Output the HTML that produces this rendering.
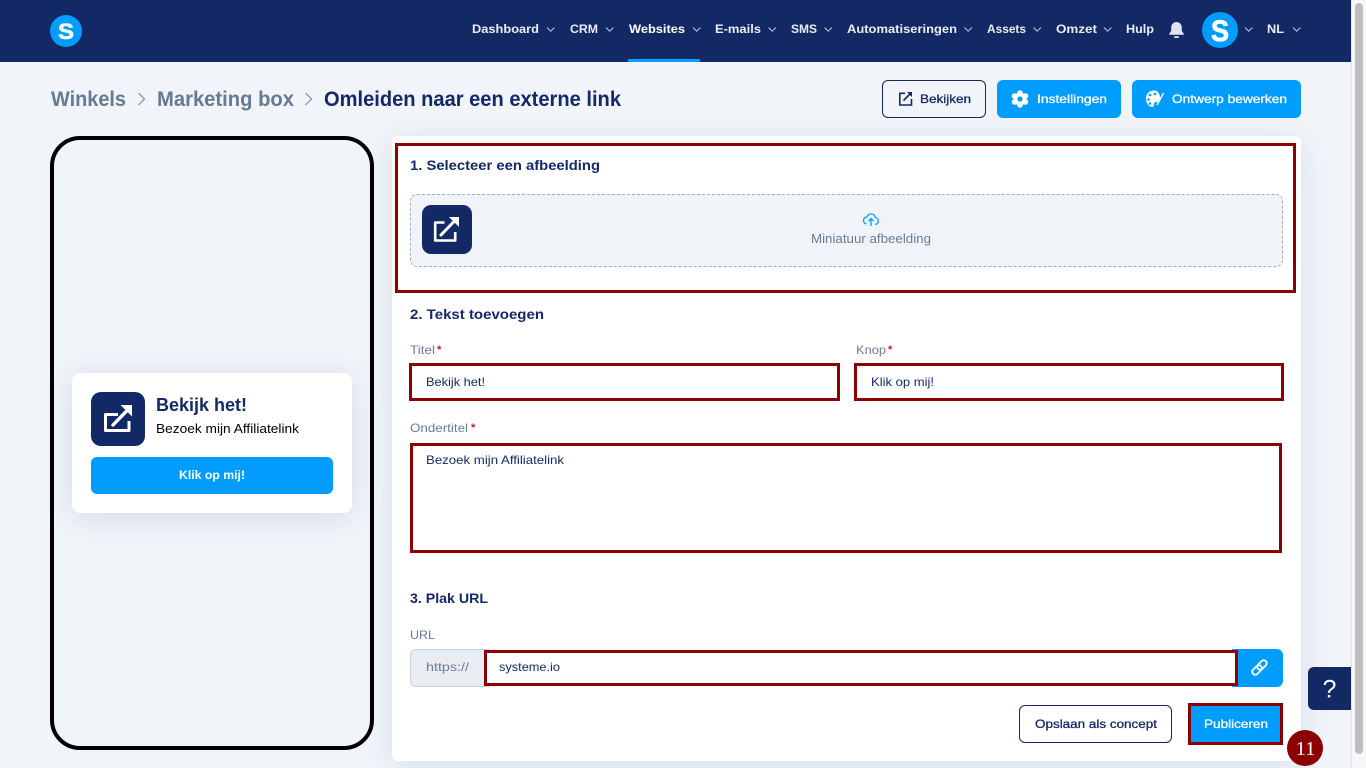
<!DOCTYPE html>
<html lang="nl"><head><meta charset="utf-8"><title>Omleiden naar een externe link</title>
<style>
html,body{margin:0;padding:0;width:1366px;height:768px;overflow:hidden;background:#f1f4f9}
div{position:absolute;box-sizing:border-box}
svg{position:absolute;left:0;top:0}
text{font-family:"Liberation Sans",sans-serif}
.b{font-weight:700}
.m{font-size:12px;stroke-width:.3px}
.mw{fill:#fff;stroke:#fff}
.mn{fill:#14296a;stroke:#14296a}
.w{fill:#fff}
.n{fill:#14296a}
.g{fill:#6a7c96}
.red{border:3px solid #8b0000}
</style></head><body>
<div style="left:0;top:0;width:1351px;height:62px;background:#132966"></div>
<div style="left:628px;top:59px;width:72px;height:3px;background:#009dff"></div>
<div style="left:1351px;top:0;width:15px;height:768px;background:#f7f7f7;border-left:1px solid #e6e6e6"></div>
<div style="left:1355px;top:3px;width:8px;height:751px;background:#bfbfbf;border-radius:4px"></div>

<div style="left:50px;top:136px;width:324px;height:614px;border:4px solid #000;border-radius:30px"></div>
<div style="left:72px;top:373px;width:280px;height:140px;background:#fff;border-radius:8px;box-shadow:0 4px 30px rgba(20,41,102,.12)"></div>
<div style="left:91px;top:392px;width:54px;height:54px;background:#132966;border-radius:10px"></div>
<div style="left:91px;top:457px;width:242px;height:37px;background:#009dff;border-radius:6px"></div>

<div style="left:392px;top:136px;width:909px;height:625px;background:#fff;border-radius:6px;box-shadow:0 5px 30px rgba(20,41,102,.1)"></div>
<div style="left:410px;top:194px;width:873px;height:73px;background:#f0f4f9;border:1px dashed #9db2bd;border-radius:7px"></div>
<div style="left:422px;top:205px;width:50px;height:49px;background:#132966;border-radius:9px"></div>
<div class="red" style="left:395px;top:143px;width:901px;height:150px"></div>
<div class="red" style="left:409px;top:363px;width:431px;height:38px"></div>
<div class="red" style="left:854px;top:363px;width:430px;height:38px"></div>
<div class="red" style="left:410px;top:443px;width:872px;height:110px"></div>
<div style="left:410px;top:649px;width:80px;height:38px;background:#e9edf3;border:1px solid #c9d4de;border-radius:6px 0 0 6px"></div>
<div style="left:1232px;top:649px;width:51px;height:38px;background:#009dff;border-radius:0 6px 6px 0"></div>
<div class="red" style="left:484px;top:650px;width:754px;height:36px;background:#fff"></div>

<div style="left:882px;top:80px;width:104px;height:38px;border:1px solid #132966;border-radius:6px"></div>
<div style="left:997px;top:80px;width:124px;height:38px;background:#009dff;border-radius:6px"></div>
<div style="left:1132px;top:80px;width:169px;height:38px;background:#009dff;border-radius:6px"></div>
<div style="left:1019px;top:705px;width:153px;height:38px;border:1px solid #132966;border-radius:6px;background:#fff"></div>
<div class="red" style="left:1188px;top:703px;width:95px;height:42px;background:#009dff"></div>
<div style="left:1308px;top:667px;width:43px;height:43px;background:#132966;border-radius:6px 0 0 6px"></div>

<svg width="1366" height="768" viewBox="0 0 1366 768" xmlns="http://www.w3.org/2000/svg">
<circle cx="66" cy="31" r="16" fill="#009dff"/>
<text x="58" y="39" textLength="16" lengthAdjust="spacingAndGlyphs" class="b w" font-size="22" stroke="#fff" stroke-width=".6">S</text>
<circle cx="1220" cy="30" r="18" fill="#009dff"/>
<text x="1211" y="41" textLength="18" lengthAdjust="spacingAndGlyphs" class="b w" font-size="30" stroke="#fff" stroke-width=".8">S</text>

<g class="b" font-size="12" fill="#e9edf5">
<text x="472" y="33" textLength="67" lengthAdjust="spacingAndGlyphs">Dashboard</text>
<text x="570" y="33" textLength="28" lengthAdjust="spacingAndGlyphs">CRM</text>
<text x="629" y="33" textLength="56" lengthAdjust="spacingAndGlyphs" fill="#fff">Websites</text>
<text x="715" y="33" textLength="46" lengthAdjust="spacingAndGlyphs">E-mails</text>
<text x="791" y="33" textLength="26" lengthAdjust="spacingAndGlyphs">SMS</text>
<text x="847" y="33" textLength="110" lengthAdjust="spacingAndGlyphs">Automatiseringen</text>
<text x="987" y="33" textLength="39" lengthAdjust="spacingAndGlyphs">Assets</text>
<text x="1056" y="33" textLength="41" lengthAdjust="spacingAndGlyphs">Omzet</text>
<text x="1126" y="33" textLength="28" lengthAdjust="spacingAndGlyphs">Hulp</text>
<text x="1267" y="33" textLength="17" lengthAdjust="spacingAndGlyphs">NL</text>
</g>
<g fill="none" stroke="#c9d1e0" stroke-width=".9">
<path d="M547 27.500l3.700 3.700 3.700-3.700"/>
<path d="M606 27.500l3.700 3.700 3.700-3.700"/>
<path d="M693 27.500l3.700 3.700 3.700-3.700"/>
<path d="M768.500 27.500l3.700 3.700 3.700-3.700"/>
<path d="M824.500 27.500l3.700 3.700 3.700-3.700"/>
<path d="M964.500 27.500l3.700 3.700 3.700-3.700"/>
<path d="M1033.500 27.500l3.700 3.700 3.700-3.700"/>
<path d="M1104 27.500l3.700 3.700 3.700-3.700"/>
<path d="M1245 27.500l3.700 3.700 3.700-3.700"/>
<path d="M1293 27.500l3.700 3.700 3.700-3.700"/>
</g>
<path d="M1176.500 22c-3.200 0-5.300 2.500-5.300 5.500v3.500l-2 2.800v1h14.600v-1l-2-2.800v-3.500c0-3-2.100-5.500-5.300-5.500z" fill="#dfe4ee"/>
<rect x="1174" y="36.300" width="5" height="1.700" rx=".85" fill="#dfe4ee"/>

<g class="b" font-size="21">
<text x="51" y="106" textLength="75" lengthAdjust="spacingAndGlyphs" fill="#667a94">Winkels</text>
<text x="157" y="106" textLength="137" lengthAdjust="spacingAndGlyphs" fill="#667a94">Marketing box</text>
<text x="324" y="106" textLength="297" lengthAdjust="spacingAndGlyphs" fill="#14296a">Omleiden naar een externe link</text>
</g>
<g fill="none" stroke="#7d8ea5" stroke-width="1.200">
<path d="M138.500 93l6 6-6 6"/><path d="M305.500 93l6 6-6 6"/>
</g>

<path d="M905 93.300h-5.200v11.700h11.700v-6" fill="none" stroke="#14296a" stroke-width="1.600"/>
<path d="M903.500 100.500l6.500-6.500" fill="none" stroke="#14296a" stroke-width="1.600"/>
<path d="M907 92h5v5z" fill="#14296a"/>
<text x="920" y="103" textLength="51" lengthAdjust="spacingAndGlyphs" class="m mn">Bekijken</text>
<g transform="translate(1020 99)" fill="#fff">
<circle r="6.500"/><circle cy="-6" r="2.800"/><circle cy="6" r="2.800"/><circle cx="5.500" cy="-3" r="2.800"/><circle cx="-5.500" cy="-3" r="2.800"/><circle cx="5.500" cy="3" r="2.800"/><circle cx="-5.500" cy="3" r="2.800"/>
<circle r="2.600" fill="#009dff"/>
</g>
<text x="1037" y="103" textLength="70" lengthAdjust="spacingAndGlyphs" class="m mw">Instellingen</text>
<path d="M1154 90.500c-5 0-8 3.500-8 8 0 4 2.500 8.500 6 8.500 2 0 2-1.500 2-3s1.500-2 3-2 3-1 3-4c0-4.500-2.500-7.500-6-7.500z" fill="#fff"/>
<g fill="#009dff"><circle cx="1150" cy="95" r="1.300"/><circle cx="1155" cy="94" r="1.300"/><circle cx="1148.500" cy="99.500" r="1.300"/><circle cx="1150" cy="103.500" r="1.300"/></g>
<path d="M1163.500 93l-6.500 12" stroke="#fff" stroke-width="1.400" fill="none"/>
<text x="1172" y="103" textLength="115" lengthAdjust="spacingAndGlyphs" class="m mw">Ontwerp bewerken</text>

<path d="M118 414.500h-12.500v16h23.500v-9.500" fill="none" stroke="#fff" stroke-width="3" stroke-linejoin="round"/>
<path d="M113 425l15-15.500" fill="none" stroke="#fff" stroke-width="3.400" stroke-linecap="round"/>
<path d="M120.500 405h11.500v11.500z" fill="#fff"/>
<path d="M444.500 222.500h-9.300v18h20v-8.500" fill="none" stroke="#fff" stroke-width="2.600" stroke-linejoin="round"/>
<path d="M441 235l13.500-14" fill="none" stroke="#fff" stroke-width="3" stroke-linecap="round"/>
<path d="M449 217h10v10z" fill="#fff"/>
<text x="156" y="411" textLength="91" lengthAdjust="spacingAndGlyphs" class="b n" font-size="18">Bekijk het!</text>
<text x="156" y="433" textLength="143" lengthAdjust="spacingAndGlyphs" font-size="13" fill="#000">Bezoek mijn Affiliatelink</text>
<text x="179" y="479" textLength="66" lengthAdjust="spacingAndGlyphs" class="b w" font-size="12">Klik op mij!</text>

<g class="b n" font-size="14">
<text x="410" y="170" textLength="190" lengthAdjust="spacingAndGlyphs">1. Selecteer een afbeelding</text>
<text x="410" y="319" textLength="134" lengthAdjust="spacingAndGlyphs">2. Tekst toevoegen</text>
<text x="410" y="603" textLength="78" lengthAdjust="spacingAndGlyphs">3. Plak URL</text>
</g>
<path d="M866.500 224c-2-.5-3-2-3-3.500 0-2 1.500-3.500 3.300-3.500.7-2 2.300-3 4.200-3 2.300 0 4 1.500 4.300 3.500 1.700.2 3 1.500 3 3.200 0 1.800-1 3.300-3 3.800M871 226v-7M868.500 221l2.500-2.500 2.500 2.500" fill="none" stroke="#009dff" stroke-width="1.300"/>
<text x="811" y="243" textLength="120" lengthAdjust="spacingAndGlyphs" class="g" font-size="12.500">Miniatuur afbeelding</text>

<g class="g" font-size="12">
<text x="410" y="354" textLength="25" lengthAdjust="spacingAndGlyphs">Titel</text>
<text x="856" y="354" textLength="30" lengthAdjust="spacingAndGlyphs">Knop</text>
<text x="410" y="432" textLength="58" lengthAdjust="spacingAndGlyphs">Ondertitel</text>
<text x="410" y="639" textLength="25" lengthAdjust="spacingAndGlyphs">URL</text>
<text x="426" y="671" textLength="43" lengthAdjust="spacingAndGlyphs">https://</text>
</g>
<g fill="#e8003d" class="b" font-size="11">
<text x="437" y="353">*</text><text x="888" y="353">*</text><text x="471" y="431">*</text>
</g>
<g class="n" font-size="12">
<text x="426" y="386" textLength="59" lengthAdjust="spacingAndGlyphs">Bekijk het!</text>
<text x="871" y="386" textLength="63" lengthAdjust="spacingAndGlyphs">Klik op mij!</text>
<text x="426" y="464" textLength="138" lengthAdjust="spacingAndGlyphs">Bezoek mijn Affiliatelink</text>
<text x="499" y="671" textLength="61" lengthAdjust="spacingAndGlyphs">systeme.io</text>
</g>
<g transform="translate(1259.500 667.500) rotate(-45)" fill="none" stroke="#fff" stroke-width="1.800">
<rect x="-9" y="-3" width="11" height="6" rx="3"/>
<rect x="-2" y="-3" width="11" height="6" rx="3"/>
</g>
<text x="1035" y="728" textLength="122" lengthAdjust="spacingAndGlyphs" class="m mn">Opslaan als concept</text>
<text x="1204" y="728" textLength="64" lengthAdjust="spacingAndGlyphs" class="m mw">Publiceren</text>
<text x="1329.500" y="697.500" text-anchor="middle" class="w" font-size="25">?</text>
<circle cx="1305" cy="748" r="18" fill="#8b0000"/>
<text x="1295.500" y="755" textLength="20" lengthAdjust="spacingAndGlyphs" font-size="20" fill="#fff" style="font-family:'Liberation Serif',serif">11</text>
</svg>
</body></html>
